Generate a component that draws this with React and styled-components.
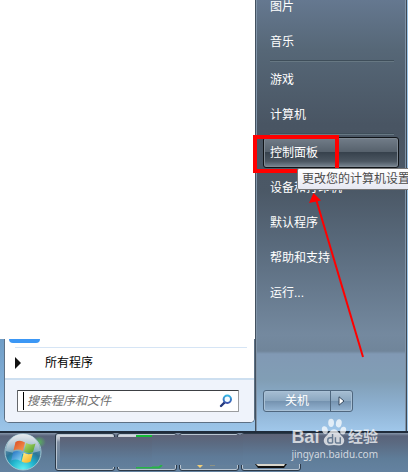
import React from "react";
import styled, { createGlobalStyle } from "styled-components";

const GlobalStyle = createGlobalStyle`
  * {
    box-sizing: border-box;
  }
  body {
    margin: 0;
    font-family: "Liberation Sans", "Noto Sans CJK SC", sans-serif;
    font-size: 12px;
    line-height: 16px;
  }
  button, input {
    font: inherit;
    margin: 0;
    padding: 0;
  }
`;

const Desktop = styled.div`
  position: relative;
  min-height: 100vh;
  display: flex;
  flex-direction: column;
  overflow: hidden;
  background: #9cc5e8;
`;

const StartMenu = styled.div`
  flex: 1;
  display: grid;
  grid-template-columns: minmax(0, 1fr) 153px;
`;

const Left = styled.div`
  display: flex;
  flex-direction: column;
  background: linear-gradient(#6f9cc4 78%, #82afd8 90%, #9cc5e8);
`;

const Blank = styled.div`
  flex: 1;
  background: white;
`;

const Programs = styled.div`
  margin: 0 0 8px 4px;
  border: 1px solid #5d7084;
  border-top: 0;
  border-radius: 0 0 5px 5px;
  background: white;
  overflow: hidden;
`;

const PinnedIcon = styled.div`
  width: 31px;
  height: 4px;
  margin-left: 4px;
  border-radius: 0 0 8px 8px;
  background: #3b97f5;
`;

const AllPrograms = styled.button`
  display: flex;
  align-items: center;
  gap: 24px;
  width: calc(100% - 17px);
  height: 31px;
  margin: 4px 7px 0 10px;
  border: 0;
  border-top: 1px solid #d6e5f5;
  background: white;
  color: black;
  svg {
    display: block;
  }
`;

const SearchBar = styled.form`
  height: 44px;
  padding: 10px 15px 0 12px;
  border-top: 2px solid #cddff0;
  background: #eff3fb;
`;

const SearchBox = styled.label`
  display: flex;
  align-items: center;
  height: 22px;
  padding: 0 5px;
  border: 1px solid #9a9c9f;
  border-top-color: #3c3f43;
  border-left-color: #64676b;
  border-radius: 1px;
  background: white;
  input {
    flex: 1;
    min-width: 0;
    height: 18px;
    padding-left: 3px;
    border: 0;
    border-left: 1px solid black;
    outline: 0;
    background: none;
  }
  input::placeholder {
    color: #6d6d6d;
    font-style: italic;
    opacity: 1;
  }
`;

const Right = styled.div`
  display: flex;
  flex-direction: column;
  margin-right: 1px;
  padding: 0 7px 19px 7px;
  border-left: 1px solid #43515f;
  border-right: 1px solid #3d4854;
  box-shadow: inset 1px 0 #8194a8, inset -1px 0 #8194a8;
  background: linear-gradient(
    #657890 0,
    #566777 50px,
    #495563 125px,
    #4b5866 190px,
    #596a7c 245px,
    #74899f 335px,
    #70859a 351px,
    #8199b4 354px,
    #819eb5 380px,
    #8cafcf 404px,
    #a0c7ea 431px
  );
`;

const Links = styled.nav`
  display: flex;
  flex-direction: column;
  margin-top: -10px;
`;

const Item = styled.div`
  position: relative;
  height: 35px;
  padding: 1px 0 3px;
`;

const ItemLink = styled.a`
  display: flex;
  align-items: center;
  height: 31px;
  padding-left: 6px;
  border: 1px solid ${(p) => (p.$active ? "#101418" : "transparent")};
  border-radius: 3px;
  color: white;
  text-decoration: none;
  box-shadow: ${(p) => (p.$active ? "inset 0 0 0 1px #7f8993" : "none")};
  background: ${(p) =>
    p.$active
      ? "linear-gradient(#727d89, #56616c 48%, #37424d 50%, #4b5661 80%, #7c8995)"
      : "none"};
`;

const Divider = styled.hr`
  width: 124px;
  height: 2px;
  margin: 0 0 1px 7px;
  border: 0;
  border-top: 1px solid #3f4e5a;
  background: #677883;
`;

const Marker = styled.div`
  position: absolute;
  z-index: 1;
  top: -1px;
  left: -10px;
  width: 86px;
  height: 38px;
  border: 4px solid #ff0000;
`;

const Tooltip = styled.div`
  position: absolute;
  z-index: 2;
  top: 32px;
  left: 34px;
  padding: 2px 4px;
  border: 1px solid #767676;
  border-radius: 2px;
  background: linear-gradient(white, #e6e8f2);
  color: #4c4c4c;
  white-space: nowrap;
`;

const Power = styled.div`
  display: flex;
  align-self: flex-start;
  margin-top: auto;
  border: 1px solid #4f677f;
  border-radius: 3px;
  box-shadow: inset 0 0 0 1px #a9c1d6;
  background: linear-gradient(#a7bed3, #8ca8c1 48%, #7593b0 52%, #94b4d3);
`;

const PowerButton = styled.button`
  display: flex;
  align-items: center;
  justify-content: center;
  width: ${(p) => (p.$arrow ? "22px" : "66px")};
  height: 20px;
  border: 0;
  border-left: ${(p) => (p.$arrow ? "1px solid #4f677f" : "0")};
  background: none;
  color: white;
`;

const ArrowLine = styled.svg`
  position: absolute;
  z-index: 3;
  top: 193px;
  left: 309px;
  pointer-events: none;
`;

const Taskbar = styled.footer`
  position: relative;
  display: flex;
  align-items: flex-start;
  gap: 2px;
  height: 41px;
  border-top: 2px solid #202c3b;
  background: linear-gradient(#8595a9 0, #59637a 3px, #5b6a81 10px, #5f7d99 26px, #6482a0);
`;

const Orb = styled.button`
  width: 38px;
  height: 38px;
  margin: 0 11px 0 4px;
  border: 0;
  background: none;
  svg {
    display: block;
    overflow: visible;
  }
`;

const Task = styled.button`
  position: relative;
  width: 60px;
  height: 38px;
  padding: 0;
  border: 1px solid #2b3948;
  border-radius: 3px;
  box-shadow: inset 0 0 0 1px #b9c5d1;
  background: linear-gradient(#e0e3e8 0, #b7bec9 5px, #7f8da0 8px, #64809b 32px);
  svg {
    position: absolute;
    top: -1px;
    left: -1px;
  }
`;

/* plain strip laid over the middle of the task buttons */
const Cover = styled.div`
  position: absolute;
  top: ${(p) => p.$top}px;
  left: ${(p) => p.$left}px;
  width: ${(p) => p.$width}px;
  height: 30px;
  background: linear-gradient(#5d6276, #5b6a81 8px, #5f7b98 22px, #627f9c);
`;

const Watermark = styled.div`
  position: absolute;
  z-index: 4;
  right: 30px;
  bottom: 11px;
  display: flex;
  flex-direction: column;
  color: rgba(255, 255, 255, 0.72);
`;

const Brand = styled.div`
  display: flex;
  align-items: flex-end;
  justify-content: space-between;
  height: 29px;
  font-weight: bold;
  font-size: 18px;
  line-height: 20px;
  span:last-child {
    font-size: 15px;
  }
`;

const Site = styled.span`
  font-family: "Noto Sans", sans-serif;
  font-size: 10px;
  line-height: 14px;
`;

const links = [
  ["图片", "音乐"],
  ["游戏", "计算机"],
  ["控制面板", "设备和打印机", "默认程序", "帮助和支持", "运行..."],
];

const ACTIVE = "控制面板";

const SearchIcon = () => (
  <svg width="14" height="14" viewBox="0 0 14 14">
    <defs>
      <linearGradient id="lens" x1="0" y1="0" x2="0" y2="1">
        <stop offset="0" stopColor="#36b6e4" />
        <stop offset="1" stopColor="#3c50ac" />
      </linearGradient>
    </defs>
    <path d="M2 12 L5.5 8.5" stroke="#24397d" strokeWidth="2.4" strokeLinecap="round" />
    <circle cx="8.3" cy="5.3" r="3.7" fill="#f2fbff" stroke="url(#lens)" strokeWidth="2" />
  </svg>
);

const WindowsOrb = () => (
  <svg width="38" height="38" viewBox="0 0 38 38">
    <defs>
      <radialGradient id="orb" cx="0.5" cy="1" r="0.95">
        <stop offset="0" stopColor="#66f4f4" />
        <stop offset="0.35" stopColor="#21b4cd" />
        <stop offset="0.6" stopColor="#2c7598" />
        <stop offset="1" stopColor="#91a3b5" />
      </radialGradient>
      <linearGradient id="shine" x1="0" y1="0" x2="0" y2="1">
        <stop offset="0" stopColor="#fff" stopOpacity="0.75" />
        <stop offset="1" stopColor="#fff" stopOpacity="0.3" />
      </linearGradient>
      <radialGradient id="glow">
        <stop offset="0" stopColor="#57c552" stopOpacity="0.8" />
        <stop offset="1" stopColor="#57c552" stopOpacity="0" />
      </radialGradient>
      <linearGradient id="red" x1="0" y1="0" x2="1" y2="1">
        <stop offset="0" stopColor="#d84a21" />
        <stop offset="1" stopColor="#fa9c54" />
      </linearGradient>
      <linearGradient id="green" x1="0" y1="0" x2="1" y2="1">
        <stop offset="0" stopColor="#b8df69" />
        <stop offset="1" stopColor="#49972c" />
      </linearGradient>
      <linearGradient id="blue" x1="0" y1="0" x2="1" y2="1">
        <stop offset="0" stopColor="#1d6bbd" />
        <stop offset="1" stopColor="#8cdcfa" />
      </linearGradient>
      <linearGradient id="yellow" x1="0" y1="0" x2="1" y2="1">
        <stop offset="0" stopColor="#fff08c" />
        <stop offset="1" stopColor="#f5a916" />
      </linearGradient>
    </defs>
    <ellipse cx="35" cy="9" rx="7" ry="6" fill="url(#glow)" />
    <circle cx="19" cy="19" r="18" fill="url(#orb)" stroke="#9fc6d2" />
    <path d="M2 18 A17 17 0 0 1 36 18 Q19 24 2 18Z" fill="url(#shine)" />
    <path d="M11.5 9 Q16 6.5 21 9.5 L19 18 Q14 15.5 9.5 17.5Z" fill="url(#red)" />
    <path d="M22 10 Q26.5 12.5 31.5 10.5 L29 19 Q24.5 21 20 18.5Z" fill="url(#green)" />
    <path d="M9.2 18.8 Q14 16.8 18.6 19.5 L16.5 28 Q12 25.5 7.2 27.5Z" fill="url(#blue)" />
    <path d="M19.7 19.8 Q24 22.5 28.8 20.3 L26.7 28.5 Q22 31 17.6 28.5Z" fill="url(#yellow)" />
  </svg>
);

const Paw = () => (
  <svg width="26" height="29" viewBox="0 0 27 30">
    <g fill="#fff" fillOpacity="0.72">
      <ellipse cx="4" cy="12.5" rx="3" ry="4" transform="rotate(-15 4 12.5)" />
      <ellipse cx="10.5" cy="5" rx="3" ry="4.3" />
      <ellipse cx="18.5" cy="5.5" rx="3" ry="4.3" transform="rotate(10 18.5 5.5)" />
      <ellipse cx="23" cy="13" rx="3" ry="4" transform="rotate(15 23 13)" />
      <path d="M13.5 11.5 C17 11.5 18 15 20.5 17.5 C24 20 25 23 23.5 26 C21 30 17 28 13.5 28 C10 28 6 30 3.5 26 C2 23 3 20 6.5 17.5 C9 15 10 11.5 13.5 11.5Z" />
    </g>
    <path
      d="M12 16.5 V26 M12 20.5 H9.5 Q7 20.5 7 23.2 Q7 26 9.5 26 H12 M15 20 V24 Q15 26 17 26 H20 V20"
      fill="none"
      stroke="#667a91"
      strokeWidth="1.5"
    />
  </svg>
);

const App = () => {
  return (
    <Desktop>
      <GlobalStyle />
      <StartMenu>
        <Left>
          <Blank />
          <Programs>
            <PinnedIcon />
            <AllPrograms type="button">
              <svg width="6" height="12" viewBox="0 0 6 12">
                <path d="M0 0 L6 6 L0 12Z" fill="#111" />
              </svg>
              所有程序
            </AllPrograms>
            <SearchBar onSubmit={(e) => e.preventDefault()}>
              <SearchBox>
                <input type="text" aria-label="搜索程序和文件" placeholder="搜索程序和文件" />
                <SearchIcon />
              </SearchBox>
            </SearchBar>
          </Programs>
        </Left>
        <Right>
          <Links>
            {links.map((group, i) => (
              <React.Fragment key={i}>
                {i > 0 && <Divider />}
                {group.map((name) => (
                  <Item key={name}>
                    <ItemLink href="#" $active={name === ACTIVE}>
                      {name}
                    </ItemLink>
                    {name === ACTIVE && (
                      <>
                        <Marker />
                        <Tooltip role="tooltip">更改您的计算机设置</Tooltip>
                      </>
                    )}
                  </Item>
                ))}
              </React.Fragment>
            ))}
          </Links>
          <Power>
            <PowerButton type="button">关机</PowerButton>
            <PowerButton type="button" $arrow aria-label="更多">
              <svg width="7" height="10" viewBox="0 0 7 10">
                <path d="M1 0.8 L6 5 L1 9.2Z" fill="#fff" stroke="#34475c" />
              </svg>
            </PowerButton>
          </Power>
        </Right>
      </StartMenu>
      <ArrowLine width="58" height="166" viewBox="0 0 58 166">
        <path d="M7 6 L54 164" stroke="#ff0000" strokeWidth="2" />
        <path d="M4.5 0 L12 7.5 L0 10Z" fill="#ff0000" />
      </ArrowLine>
      <Taskbar>
        <Orb type="button" aria-label="开始">
          <WindowsOrb />
        </Orb>
        <Task type="button" aria-label="任务 1" />
        <Task type="button" aria-label="任务 2">
          <svg width="60" height="38" viewBox="0 0 60 38">
            <path d="M19 3 H35" stroke="#16b936" strokeWidth="2" />
            <path d="M19 34.5 H42 L45 32" fill="none" stroke="#27b545" strokeWidth="2" />
          </svg>
        </Task>
        <Task type="button" aria-label="任务 3">
          <svg width="60" height="38" viewBox="0 0 60 38">
            <path d="M18 32 H24 L21 35Z" fill="#f1cd76" />
            <path d="M31 32 H36" stroke="#b5a36e" />
          </svg>
        </Task>
        <Task type="button" aria-label="任务 4">
          <svg width="60" height="38" viewBox="0 0 60 38">
            <path d="M14 31 H46 L43 35 H17Z" fill="#111" />
            <path d="M15 31 H44 L43 33 H17Z" fill="#d8d5cb" />
          </svg>
        </Task>
        <Cover $top={4} $left={60} $width={92} />
        <Cover $top={2} $left={152} $width={91} />
        <Cover $top={1} $left={243} $width={62} />
      </Taskbar>
      <Watermark>
        <Brand>
          <span>Bai</span>
          <Paw />
          <span>经验</span>
        </Brand>
        <Site>jingyan.baidu.com</Site>
      </Watermark>
    </Desktop>
  );
};

export default App;
